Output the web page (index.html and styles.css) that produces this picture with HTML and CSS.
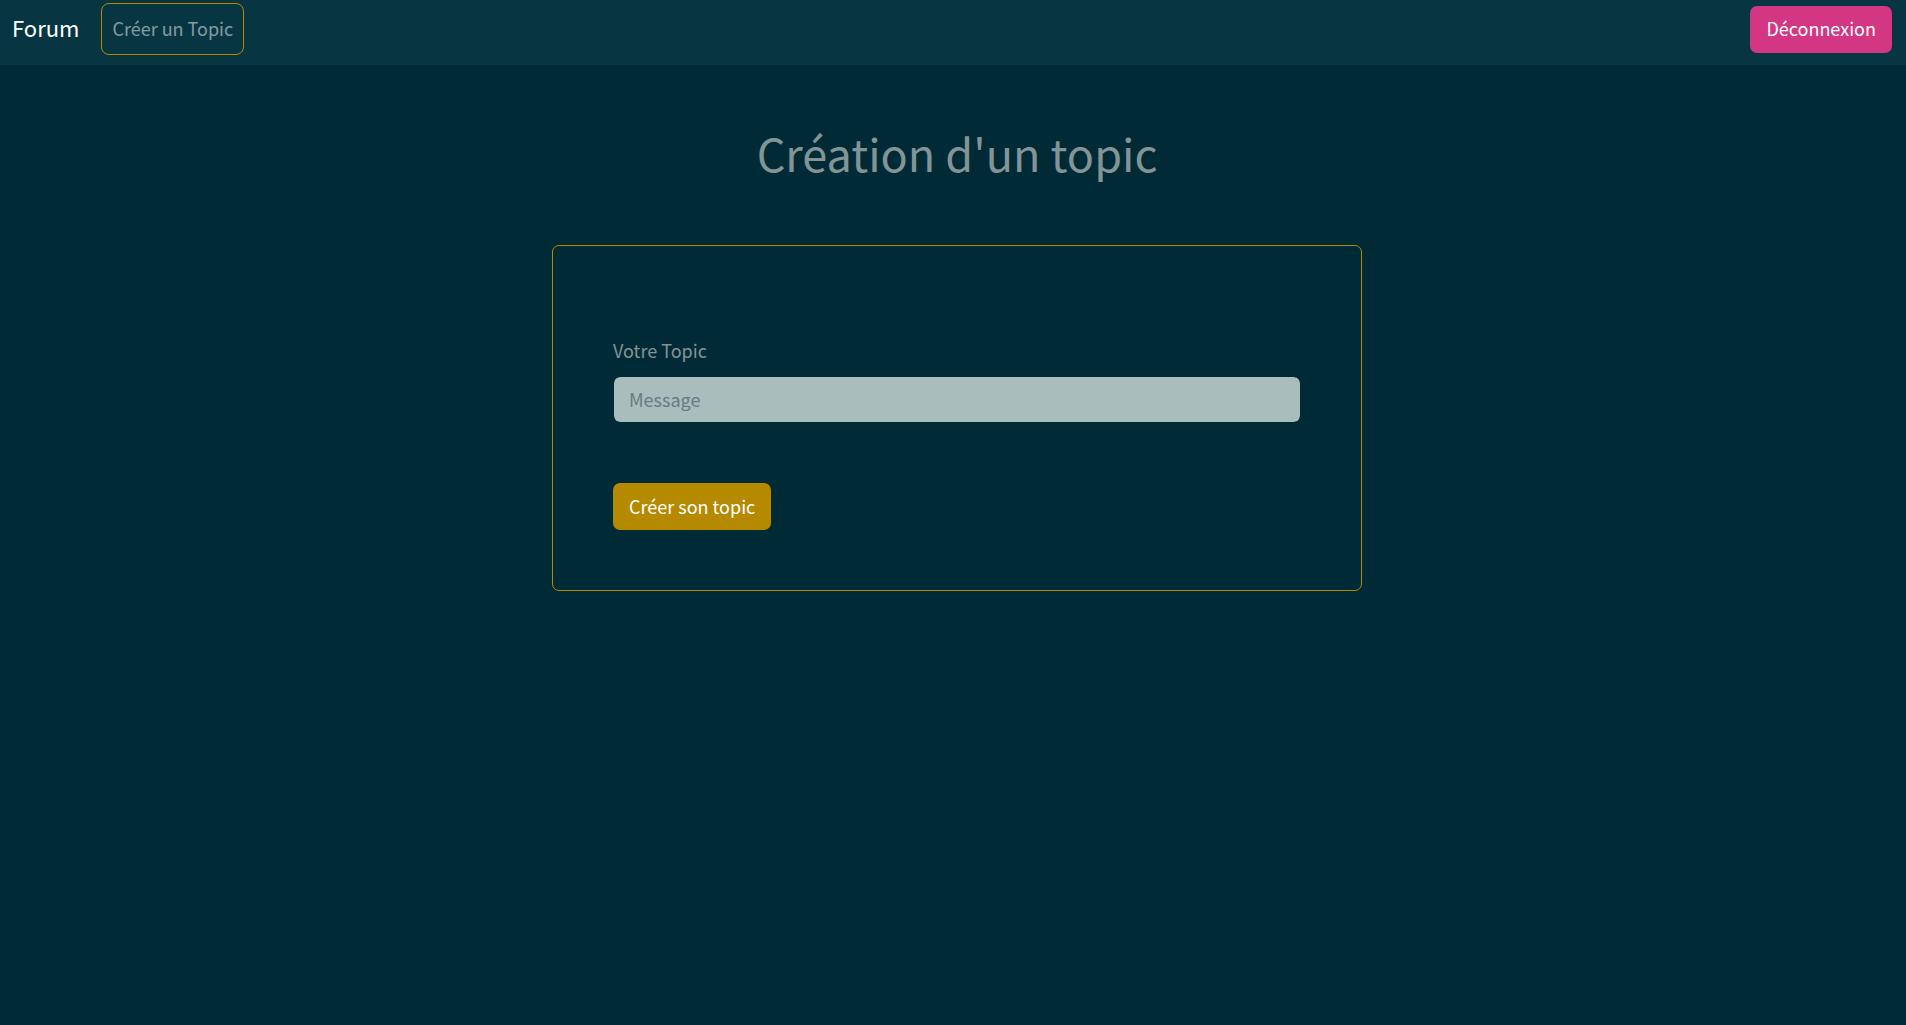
FILE: index.html
```html
<!DOCTYPE html>
<html lang="fr">
<head>
  <meta charset="utf-8">
  <meta name="viewport" content="width=device-width, initial-scale=1">
  <title>Forum - Création d'un topic</title>
  <link rel="stylesheet" href="styles.css">
</head>
<body>
  <nav class="navbar">
    <a class="brand" href="#">Forum</a>
    <a class="nav-link" href="#">Créer un Topic</a>
    <button class="btn btn-logout" type="button">Déconnexion</button>
  </nav>
  <main class="page">
    <h1 class="title">Création d'un topic</h1>
    <form class="card">
      <label class="label" for="topic">Votre Topic</label>
      <input class="input" id="topic" type="text" placeholder="Message">
      <button class="btn btn-primary" type="submit">Créer son topic</button>
    </form>
  </main>
</body>
</html>
```
FILE: styles.css
```css
* {
  box-sizing: border-box;
}

body {
  margin: 0;
  background: #002b36;
  color: #839496;
  font-family: "Noto Sans CJK SC", "Noto Sans", sans-serif;
  font-size: 18px;
  line-height: 28px;
}

.navbar {
  display: flex;
  align-items: center;
  padding: 3px 14px 10px 12px;
  background: #073642;
}

.brand {
  margin-right: 22px;
  padding-bottom: 4px;
  color: #fff;
  font-size: 22px;
  text-decoration: none;
}

.nav-link {
  padding: 10px 10px 12px;
  border: 1px solid #b58900;
  border-radius: 8px;
  color: rgba(255, 255, 255, 0.5);
  text-decoration: none;
}

.btn {
  padding: 9px 16px;
  border: 0;
  border-radius: 7px;
  color: #fff;
  font: inherit;
  line-height: 29px;
}

.btn-logout {
  margin-left: auto;
  padding: 8px 16px 10px;
  background: #d33682;
}

.btn-primary {
  background: #b58900;
}

.page {
  padding: 58px 12px 60px 20px;
}

.title {
  margin: 0 0 62px;
  font-size: 45px;
  font-weight: 400;
  line-height: 60px;
  text-align: center;
}

.card {
  display: flex;
  flex-direction: column;
  align-items: flex-start;
  max-width: 810px;
  margin: 0 auto;
  padding: 90px 60px 60px;
  border: 1px solid #b58900;
  border-radius: 7px;
}

.label {
  margin-bottom: 12px;
}

.input {
  width: 100%;
  margin-bottom: 60px;
  padding: 8px 15px;
  border: 1px solid #002b36;
  border-radius: 7px;
  background: #a9bdbd;
  background-clip: padding-box;
  color: #002b36;
  font: inherit;
  line-height: 29px;
}

.input::placeholder {
  color: #657b83;
  opacity: 1;
}
```
